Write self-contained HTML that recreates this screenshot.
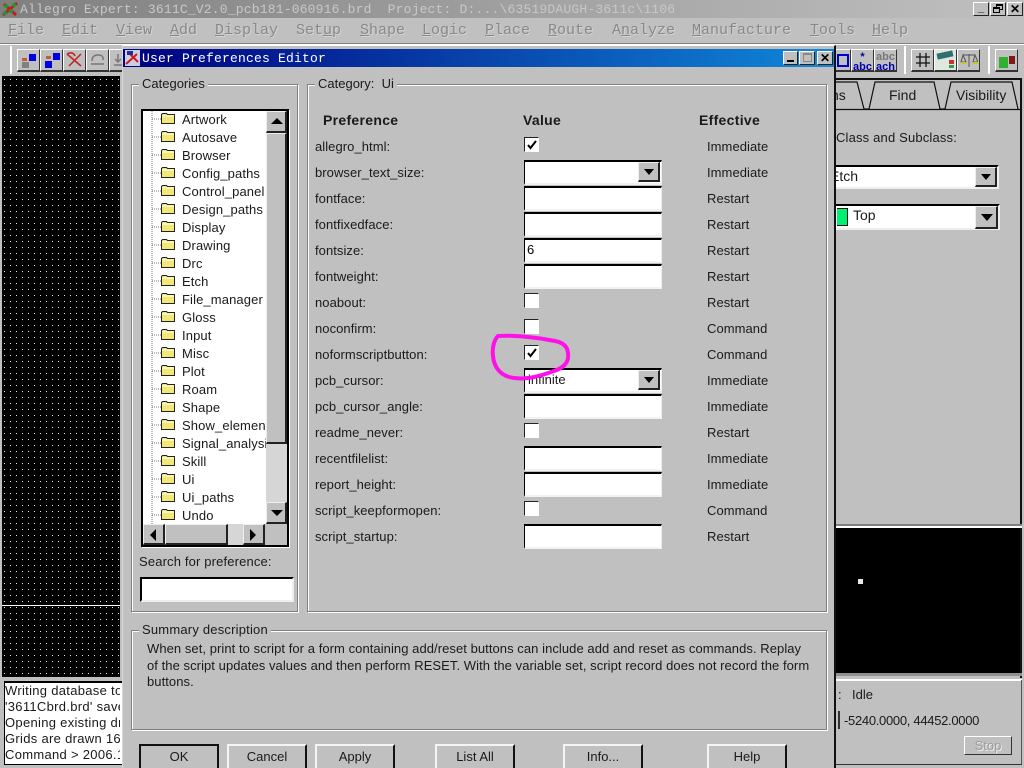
<!DOCTYPE html>
<html><head><meta charset="utf-8"><style>
html,body{margin:0;padding:0;width:1024px;height:768px;overflow:hidden;background:#c0c0c0}
body{position:relative;font:13px/16px "Liberation Sans",sans-serif;color:#000}
div,span,svg{position:absolute;white-space:nowrap;box-sizing:border-box}
.m{top:22px;font:15px/18px "Liberation Mono",monospace;color:#888;text-shadow:1px 1px 0 #d4d4d4}
.m u{position:static}
.grp{border:1px solid #808080;box-shadow:inset 1px 1px 0 #fff,1px 1px 0 #fff}
.gl{background:#c0c0c0;padding:0 3px;top:76px;height:16px;color:#1a1a1a}
.l{left:315px;color:#1a1a1a;margin-top:1px;letter-spacing:.06px}.e{left:707px;color:#1a1a1a;margin-top:1px;letter-spacing:.06px}
.f{left:524px;width:138px;height:25px;background:#fff;border-top:2px solid #000;border-left:1px solid #000;border-right:1px solid #eee;border-bottom:2px solid #f2f2f2}
.c{left:524px;width:15px;height:15px;background:#fff;border-top:1px solid #222;border-left:1px solid #222;border-right:1px solid #fff;border-bottom:1px solid #fff}
.ar{background:#c0c0c0;border-top:1px solid #eee;border-left:1px solid #eee;border-right:2px solid #222;border-bottom:2px solid #222}
.t{left:182px;color:#1a1a1a;width:84px;overflow:hidden;margin-top:1px;letter-spacing:.12px}
.btn{top:744px;width:80px;height:26px;background:#c0c0c0;border-top:2px solid #f4f4f4;border-left:2px solid #f4f4f4;border-right:2px solid #111;text-align:center;line-height:20px;padding-top:1px;color:#1a1a1a}
.tb{width:23px;height:23px;background:#c0c0c0;border-top:1px solid #fff;border-left:1px solid #fff;border-right:1px solid #333;border-bottom:2px solid #333}
.lg{left:5px;width:115px;overflow:hidden;color:#1a1a1a;font-size:13px;letter-spacing:.3px}
.h{top:112px;font-weight:700;font-size:14px;color:#1a1a1a;letter-spacing:.3px}
.s{left:147px;color:#1a1a1a;letter-spacing:.06px}
</style></head><body>
<!-- main title -->
<div style="left:0;top:0;width:1024px;height:18px;background:linear-gradient(90deg,#808080,#c0c0c0)"></div>
<svg style="left:2px;top:1px" width="17" height="16" viewBox="0 0 17 16"><path d="M1 14L15 2M2 3l12 11" stroke="#d01818" stroke-width="3"/><circle cx="4" cy="5" r="2" fill="#10a030"/><circle cx="12" cy="4" r="2" fill="#10a030"/><circle cx="9" cy="10" r="2" fill="#10a030"/><circle cx="3" cy="12" r="2" fill="#10a030"/></svg>
<div style="left:20px;top:1px;font:13px/17px 'Liberation Mono',monospace;letter-spacing:.19px;color:#c8c8c8;white-space:pre">Allegro Expert: 3611C_V2.0_pcb181-060916.brd  Project: D:...\63519DAUGH-3611c\1106</div>
<div style="left:973px;top:2px;width:16px;height:14px;background:#c0c0c0;border:1px solid;border-color:#fff #222 #222 #fff;font:700 11px/10px 'Liberation Sans';text-align:center">_</div>
<div style="left:990px;top:2px;width:16px;height:14px;background:#c0c0c0;border:1px solid;border-color:#fff #222 #222 #fff"><div style="left:5px;top:1px;width:7px;height:6px;border:1px solid #000;border-top-width:2px"></div><div style="left:2px;top:4px;width:7px;height:6px;border:1px solid #000;border-top-width:2px;background:#c0c0c0"></div></div>
<div style="left:1007px;top:2px;width:16px;height:14px;background:#c0c0c0;border:1px solid;border-color:#fff #222 #222 #fff;font:700 12px/12px 'Liberation Sans';text-align:center">✕</div>
<!-- menu -->
<div class="m" style="left:8px"><u>F</u>ile</div>
<div class="m" style="left:62px"><u>E</u>dit</div>
<div class="m" style="left:116px"><u>V</u>iew</div>
<div class="m" style="left:170px"><u>A</u>dd</div>
<div class="m" style="left:215px"><u>D</u>isplay</div>
<div class="m" style="left:296px">Set<u>u</u>p</div>
<div class="m" style="left:360px"><u>S</u>hape</div>
<div class="m" style="left:422px"><u>L</u>ogic</div>
<div class="m" style="left:485px"><u>P</u>lace</div>
<div class="m" style="left:548px"><u>R</u>oute</div>
<div class="m" style="left:612px">A<u>n</u>alyze</div>
<div class="m" style="left:692px"><u>M</u>anufacture</div>
<div class="m" style="left:810px"><u>T</u>ools</div>
<div class="m" style="left:872px"><u>H</u>elp</div>
<div style="left:0;top:43px;width:1024px;height:2px;background:#808080;border-bottom:1px solid #fff"></div>
<!-- left toolbar -->
<div style="left:10px;top:46px;width:2px;height:28px;background:#fff"></div>
<div class="tb" style="left:17px;top:49px"><div style="left:11px;top:4px;width:7px;height:7px;background:#0000e0"></div><div style="left:4px;top:8px;width:5px;height:3px;background:#c06030"></div><div style="left:4px;top:12px;width:7px;height:6px;background:#808080"></div></div>
<div class="tb" style="left:40px;top:49px"><div style="left:12px;top:3px;width:7px;height:7px;background:#0000e0"></div><div style="left:4px;top:11px;width:7px;height:7px;background:#0000e0"></div><div style="left:5px;top:6px;width:5px;height:3px;background:#c06030"></div></div>
<div class="tb" style="left:63px;top:49px"><svg style="left:2px;top:1px" width="18" height="18"><path d="M1 3l14 12M15 3L3 15M1 3q6 -3 8 2" stroke="#c02020" stroke-width="1.500" fill="none"/></svg></div>
<div class="tb" style="left:86px;top:49px"><svg style="left:3px;top:3px" width="16" height="14"><path d="M2 8q0-6 6-6t5 5M1 11h13" stroke="#777" stroke-width="1.500" fill="none"/></svg></div>
<div class="tb" style="left:109px;top:49px"><svg style="left:3px;top:3px" width="12" height="14"><path d="M5 1v8M2 6l3 3 3-3M1 12h8" stroke="#777" stroke-width="1.500" fill="none"/></svg></div>
<!-- canvas -->
<div style="left:0;top:75px;width:122px;height:604px;background:#c0c0c0"></div>
<svg style="left:2px;top:76px" width="118" height="601"><defs><pattern id="d" width="6" height="6" patternUnits="userSpaceOnUse"><rect width="6" height="6" fill="#000"/><rect x="2" y="3" width="1" height="1" fill="#e8e8e8"/></pattern></defs><rect width="118" height="601" fill="url(#d)"/><rect y="529" width="118" height="1" fill="#fff"/></svg>
<div style="left:4px;top:681px;width:118px;height:84px;background:#fff;border:1px solid #000;border-right:0;border-top-width:2px"></div>
<div class="lg" style="top:683px">Writing database to</div>
<div class="lg" style="top:699px">'3611Cbrd.brd' saved</div>
<div class="lg" style="top:715px">Opening existing dr</div>
<div class="lg" style="top:731px">Grids are drawn 16.</div>
<div class="lg" style="top:747px">Command &gt; 2006.11</div>
<!-- right toolbar -->
<div class="tb" style="left:829px;top:49px;width:22px"><div style="left:7px;top:4px;width:12px;height:13px;border:2px solid #0000d0"></div></div>
<div class="tb" style="left:851px;top:49px;font:700 11px/10px 'Liberation Sans';color:#0000b0;text-align:center;padding-top:2px">*<br>abc</div>
<div class="tb" style="left:874px;top:49px;font:700 11px/10px 'Liberation Sans';color:#0000b0;text-align:center;padding-top:2px"><span style="position:static;color:#777">abc</span><br>ach</div>
<div style="left:904px;top:46px;width:2px;height:28px;background:#fff"></div>
<div class="tb" style="left:911px;top:49px"><svg style="left:3px;top:2px" width="16" height="16"><path d="M5 1v14M11 1v14M1 5h14M1 11h14" stroke="#111" stroke-width="1.300"/></svg></div>
<div class="tb" style="left:934px;top:49px;background:#dfe8df"><div style="left:2px;top:2px;width:16px;height:6px;background:#2f6f6f;transform:rotate(-12deg)"></div><div style="left:14px;top:10px;width:5px;height:4px;background:#d03030"></div><div style="left:14px;top:15px;width:5px;height:3px;background:#30a050"></div></div>
<div class="tb" style="left:957px;top:49px"><svg style="left:2px;top:2px" width="18" height="17"><path d="M9 2v13M3 3h12M3 3l-2 7h5zM15 3l-2 7h5z" stroke="#555" fill="none"/><path d="M1 11h5M13 11h5" stroke="#c8c820" stroke-width="2"/></svg></div>
<div style="left:988px;top:46px;width:2px;height:28px;background:#fff"></div>
<div class="tb" style="left:995px;top:49px"><div style="left:3px;top:7px;width:9px;height:11px;background:#30b030"></div><div style="left:13px;top:6px;width:6px;height:8px;background:#801818"></div></div>
<!-- right panel -->
<div style="left:836px;top:78px;width:186px;height:2px;background:#111"></div>
<div style="left:1020px;top:78px;width:2px;height:600px;background:#111"></div>
<svg style="left:830px;top:78px" width="194" height="36"><path d="M0 4H27L34 31H39L45 4H104L110 31H115L121 4H182L188 31M0 31.500H191" stroke="#111" stroke-width="1.200" fill="none"/></svg>
<div style="left:836px;top:87px;width:14px;overflow:hidden;font-size:14px;color:#1a1a1a"><span style="position:static;margin-left:-5px">ns</span></div>
<div style="left:889px;top:87px;font-size:14px;color:#1a1a1a">Find</div>
<div style="left:956px;top:87px;font-size:14px;color:#1a1a1a">Visibility</div>
<div style="left:836px;top:130px;letter-spacing:.17px;color:#1a1a1a">Class and Subclass:</div>
<div style="left:836px;top:165px;width:163px;height:24px;background:#fff;border-top:2px solid #000;border-bottom:2px solid #eee;border-right:2px solid #eee"></div>
<div style="left:836px;top:168px;font-size:14px;width:30px;overflow:hidden;color:#1a1a1a"><span style="position:static;margin-left:-6px">Etch</span></div>
<div class="ar" style="left:975px;top:167px;width:22px;height:20px"><div style="left:5px;top:6px;border:5px solid transparent;border-top:6px solid #000;border-bottom:0"></div></div>
<div style="left:836px;top:204px;width:164px;height:26px;background:#fff;border-top:2px solid #000;border-bottom:2px solid #eee;border-right:2px solid #eee"></div>
<div style="left:837px;top:208px;width:11px;height:18px;background:#00f070;border:1px solid #111;border-left:0"></div>
<div style="left:853px;top:207px;font-size:14px;color:#1a1a1a">Top</div>
<div class="ar" style="left:975px;top:206px;width:23px;height:23px"><div style="left:5px;top:7px;border:6px solid transparent;border-top:7px solid #000;border-bottom:0"></div></div>
<div style="left:836px;top:524px;width:186px;height:2px;background:#808080"></div>
<div style="left:836px;top:526px;width:186px;height:2px;background:#fff"></div>
<div style="left:836px;top:528px;width:184px;height:145px;background:#000"></div>
<div style="left:836px;top:673px;width:186px;height:3px;background:#909090"></div>
<div style="left:858px;top:579px;width:5px;height:5px;background:#e8e8e8"></div>
<div style="left:836px;top:679px;width:186px;height:2px;background:#fff"></div>
<div style="left:1021px;top:680px;width:1px;height:85px;background:#555"></div>
<div style="left:836px;top:764px;width:186px;height:1px;background:#333"></div>
<div style="left:838px;top:687px;color:#1a1a1a">:</div>
<div style="left:852px;top:687px;color:#1a1a1a">Idle</div>
<div style="left:838px;top:711px;width:2px;height:18px;background:#333"></div>
<div style="left:844px;top:713px;letter-spacing:-.3px;color:#1a1a1a">-5240.0000, 44452.0000</div>
<div style="left:964px;top:736px;width:48px;height:19px;border:1px solid;border-color:#fff #333 #333 #fff;text-align:center;line-height:17px;color:#9c9c9c;text-shadow:1px 1px 0 #eee">Stop</div>
<!-- dialog -->
<div style="left:122px;top:45px;width:714px;height:723px;background:#c0c0c0;border-left:1px solid #d8d8d8;border-right:2px solid #111;border-top:1px solid #fff"></div>
<div style="left:123px;top:49px;width:711px;height:18px;background:linear-gradient(90deg,#000080,#1088d8)"></div>
<svg style="left:125px;top:50px" width="15" height="16"><rect width="15" height="16" fill="#c8cee8"/><path d="M1 14L12 4M5 4l8 8" stroke="#d81818" stroke-width="2"/><rect x="2" y="1" width="6" height="4" fill="#203090"/></svg>
<div style="left:142px;top:50px;font:13px/17px 'Liberation Mono',monospace;letter-spacing:.2px;color:#fff;white-space:pre">User Preferences Editor</div>
<div style="left:783px;top:51px;width:15px;height:14px;background:#c0c0c0;border:1px solid;border-color:#fff #222 #222 #fff"><div style="left:3px;top:8px;width:7px;height:2px;background:#000"></div></div>
<div style="left:799px;top:51px;width:16px;height:14px;background:#c0c0c0;border:1px solid;border-color:#fff #222 #222 #fff"><div style="left:3px;top:1px;width:9px;height:9px;border:1px solid #888;border-top-width:2px"></div></div>
<div style="left:817px;top:51px;width:16px;height:14px;background:#c0c0c0;border:1px solid;border-color:#fff #222 #222 #fff;font:700 12px/12px 'Liberation Sans';text-align:center">✕</div>
<!-- groups -->
<div class="grp" style="left:131px;top:84px;width:167px;height:528px"></div>
<div class="gl" style="left:139px">Categories</div>
<div class="grp" style="left:307px;top:84px;width:520px;height:528px"></div>
<div class="gl" style="left:315px;white-space:pre">Category:  Ui</div>
<div class="grp" style="left:131px;top:630px;width:696px;height:100px"></div>
<div class="gl" style="left:139px;top:622px;letter-spacing:.2px">Summary description</div>
<!-- tree -->
<div style="left:141px;top:109px;width:148px;height:438px;background:#c0c0c0;border:2px solid #000;box-shadow:1px 1px 0 #fff"></div>
<div style="left:143px;top:111px;width:123px;height:413px;background:#fff"></div>
<svg style="left:143px;top:111px" width="24" height="413"><path d="M9 0V413" stroke="#777" stroke-dasharray="1 1"/><path d="M9 8H18M9 26H18M9 44H18M9 62H18M9 80H18M9 98H18M9 116H18M9 134H18M9 152H18M9 170H18M9 188H18M9 206H18M9 224H18M9 242H18M9 260H18M9 278H18M9 296H18M9 314H18M9 332H18M9 350H18M9 368H18M9 386H18M9 404H18" stroke="#777" stroke-dasharray="1 1"/></svg>
<svg style="left:160px;top:111px" width="18" height="413"><defs><g id="fo"><path d="M1.500 3.500v-1l1-1h4l1 1h7v9h-13z" fill="#f2e878" stroke="#222"/><path d="M2 4h12" stroke="#fff"/></g></defs><use href="#fo" y="1"/><use href="#fo" y="19"/><use href="#fo" y="37"/><use href="#fo" y="55"/><use href="#fo" y="73"/><use href="#fo" y="91"/><use href="#fo" y="109"/><use href="#fo" y="127"/><use href="#fo" y="145"/><use href="#fo" y="163"/><use href="#fo" y="181"/><use href="#fo" y="199"/><use href="#fo" y="217"/><use href="#fo" y="235"/><use href="#fo" y="253"/><use href="#fo" y="271"/><use href="#fo" y="289"/><use href="#fo" y="307"/><use href="#fo" y="325"/><use href="#fo" y="343"/><use href="#fo" y="361"/><use href="#fo" y="379"/><use href="#fo" y="397"/></svg>
<div class="t" style="top:111px">Artwork</div><div class="t" style="top:129px">Autosave</div><div class="t" style="top:147px">Browser</div><div class="t" style="top:165px">Config_paths</div><div class="t" style="top:183px">Control_panel</div><div class="t" style="top:201px">Design_paths</div><div class="t" style="top:219px">Display</div><div class="t" style="top:237px">Drawing</div><div class="t" style="top:255px">Drc</div><div class="t" style="top:273px">Etch</div><div class="t" style="top:291px">File_manager</div><div class="t" style="top:309px">Gloss</div><div class="t" style="top:327px">Input</div><div class="t" style="top:345px">Misc</div><div class="t" style="top:363px">Plot</div><div class="t" style="top:381px">Roam</div><div class="t" style="top:399px">Shape</div><div class="t" style="top:417px">Show_element</div><div class="t" style="top:435px">Signal_analysis</div><div class="t" style="top:453px">Skill</div><div class="t" style="top:471px">Ui</div><div class="t" style="top:489px">Ui_paths</div><div class="t" style="top:507px">Undo</div>
<!-- v scrollbar -->
<div class="ar" style="left:266px;top:111px;width:21px;height:22px"><div style="left:4px;top:6px;border:6px solid transparent;border-bottom:6px solid #000;border-top:0"></div></div>
<div class="ar" style="left:266px;top:133px;width:21px;height:311px"></div>
<div style="left:266px;top:444px;width:21px;height:58px;background:#d6d6d6"></div>
<div class="ar" style="left:266px;top:502px;width:21px;height:22px"><div style="left:4px;top:7px;border:6px solid transparent;border-top:6px solid #000;border-bottom:0"></div></div>
<!-- h scrollbar -->
<div class="ar" style="left:143px;top:524px;width:22px;height:21px"><div style="left:6px;top:4px;border:6px solid transparent;border-right:6px solid #000;border-left:0"></div></div>
<div class="ar" style="left:165px;top:524px;width:63px;height:21px"></div>
<div style="left:228px;top:524px;width:15px;height:21px;background:#d6d6d6"></div>
<div class="ar" style="left:243px;top:524px;width:22px;height:21px"><div style="left:6px;top:4px;border:6px solid transparent;border-left:6px solid #000;border-right:0"></div></div>
<div style="left:139px;top:554px;color:#1a1a1a;letter-spacing:.15px">Search for preference:</div>
<div style="left:140px;top:577px;width:154px;height:25px;background:#fff;border-top:2px solid #000;border-left:2px solid #000;border-right:2px solid #eee;border-bottom:2px solid #eee"></div>
<!-- prefs -->
<div class="h" style="left:323px">Preference</div>
<div class="h" style="left:523px">Value</div>
<div class="h" style="left:699px">Effective</div>
<div class="l" style="top:138px">allegro_html:</div><div class="e" style="top:138px">Immediate</div>
<div class="l" style="top:164px">browser_text_size:</div><div class="e" style="top:164px">Immediate</div>
<div class="l" style="top:190px">fontface:</div><div class="e" style="top:190px">Restart</div>
<div class="l" style="top:216px">fontfixedface:</div><div class="e" style="top:216px">Restart</div>
<div class="l" style="top:242px">fontsize:</div><div class="e" style="top:242px">Restart</div>
<div class="l" style="top:268px">fontweight:</div><div class="e" style="top:268px">Restart</div>
<div class="l" style="top:294px">noabout:</div><div class="e" style="top:294px">Restart</div>
<div class="l" style="top:320px">noconfirm:</div><div class="e" style="top:320px">Command</div>
<div class="l" style="top:346px">noformscriptbutton:</div><div class="e" style="top:346px">Command</div>
<div class="l" style="top:372px">pcb_cursor:</div><div class="e" style="top:372px">Immediate</div>
<div class="l" style="top:398px">pcb_cursor_angle:</div><div class="e" style="top:398px">Immediate</div>
<div class="l" style="top:424px">readme_never:</div><div class="e" style="top:424px">Restart</div>
<div class="l" style="top:450px">recentfilelist:</div><div class="e" style="top:450px">Immediate</div>
<div class="l" style="top:476px">report_height:</div><div class="e" style="top:476px">Immediate</div>
<div class="l" style="top:502px">script_keepformopen:</div><div class="e" style="top:502px">Command</div>
<div class="l" style="top:528px">script_startup:</div><div class="e" style="top:528px">Restart</div>
<div class="c" style="top:137px"><svg style="left:2px;top:2px" width="10" height="10"><path d="M1 5l2.500 3L9 1" stroke="#000" stroke-width="2" fill="none"/></svg></div>
<div class="f" style="top:160px"></div><div class="ar" style="left:638px;top:162px;width:22px;height:20px"><div style="left:5px;top:6px;border:5px solid transparent;border-top:6px solid #000;border-bottom:0"></div></div>
<div class="f" style="top:186px"></div><div class="f" style="top:212px"></div>
<div class="f" style="top:238px"><span style="left:2px;top:2px;font-size:13px">6</span></div>
<div class="f" style="top:264px"></div>
<div class="c" style="top:293px"></div><div class="c" style="top:319px"></div>
<div class="c" style="top:345px"><svg style="left:2px;top:2px" width="10" height="10"><path d="M1 5l2.500 3L9 1" stroke="#000" stroke-width="2" fill="none"/></svg></div>
<div class="f" style="top:368px"><span style="left:3px;top:2px;color:#1a1a1a">infinite</span></div><div class="ar" style="left:638px;top:370px;width:22px;height:20px"><div style="left:5px;top:6px;border:5px solid transparent;border-top:6px solid #000;border-bottom:0"></div></div>
<div class="f" style="top:394px"></div>
<div class="c" style="top:423px"></div>
<div class="f" style="top:446px"></div><div class="f" style="top:472px"></div>
<div class="c" style="top:501px"></div>
<div class="f" style="top:524px"></div>
<svg style="left:485px;top:328px" width="95" height="60"><path d="M13 8C28 7 50 9 70 13C80 15 84 20 83 30C82 37 76 41 66 44C50 50 35 52 24 49C14 46 9 38 8 28C7 20 9 12 13 8Z" stroke="#ff10e8" stroke-width="4" fill="none"/></svg>
<!-- summary -->
<div class="s" style="top:641px">When set, print to script for a form containing add/reset buttons can include add and reset as commands. Replay</div>
<div class="s" style="top:658px">of the script updates values and then perform RESET. With the variable set, script record does not record the form</div>
<div class="s" style="top:674px">buttons.</div>
<!-- buttons -->
<div class="btn" style="left:139px;border:2px solid #111;border-bottom:0">OK</div>
<div class="btn" style="left:227px">Cancel</div>
<div class="btn" style="left:315px">Apply</div>
<div class="btn" style="left:435px">List All</div>
<div class="btn" style="left:563px">Info...</div>
<div class="btn" style="left:707px">Help</div>
</body></html>
